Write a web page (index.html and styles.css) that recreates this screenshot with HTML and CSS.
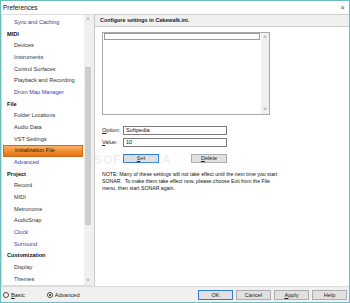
FILE: index.html
```html
<!DOCTYPE html>
<html>
<head>
  <title>Preferences</title>
  <link rel="stylesheet" href="styles.css">
</head>
<body>
  <div class="window">
    <div class="titlebar">
      <span class="title">Preferences</span>
      <span class="close">&#x2715;</span>
    </div>

    <div class="main">
      <div class="tree">
        <div class="tree-list">
          <div class="item link">Sync and Caching</div>
          <div class="cat">MIDI</div>
          <div class="item">Devices</div>
          <div class="item">Instruments</div>
          <div class="item">Control Surfaces</div>
          <div class="item">Playback and Recording</div>
          <div class="item link">Drum Map Manager</div>
          <div class="cat">File</div>
          <div class="item">Folder Locations</div>
          <div class="item">Audio Data</div>
          <div class="item">VST Settings</div>
          <div class="item selected">Initialization File</div>
          <div class="item link">Advanced</div>
          <div class="cat">Project</div>
          <div class="item">Record</div>
          <div class="item">MIDI</div>
          <div class="item">Metronome</div>
          <div class="item">AudioSnap</div>
          <div class="item link">Clock</div>
          <div class="item link">Surround</div>
          <div class="cat">Customization</div>
          <div class="item">Display</div>
          <div class="item">Themes</div>
        </div>
        <div class="vscroll">
          <span class="arrow">&#x2C4;</span>
          <div class="track"><div class="thumb"></div></div>
          <span class="arrow">&#x2C5;</span>
        </div>
      </div>

      <div class="panel">
        <div class="panel-head">Configure settings in Cakewalk.ini.</div>
        <div class="panel-body">
          <div class="listbox">
            <div class="list-items">
              <div class="list-row"></div>
            </div>
            <div class="list-scroll">
              <span class="arrow">&#x2C4;</span>
              <span class="arrow">&#x2C5;</span>
            </div>
          </div>

          <div class="field first">
            <label><u>O</u>ption:</label>
            <div class="input">Softpedia</div>
          </div>
          <div class="field">
            <label><u>V</u>alue:</label>
            <div class="input">10</div>
          </div>

          <div class="actions">
            <div class="btn default"><u>S</u>et</div>
            <div class="btn"><u>D</u>elete</div>
          </div>

          <p class="note">NOTE: Many of these settings will not take effect until the next time you start<br>SONAR.&nbsp; To make them take effect now, please choose Exit from the File<br>menu, then start SONAR again.</p>

          <div class="watermark">SOFTPEDIA</div>
        </div>
      </div>
    </div>

    <div class="footer">
      <div class="radios">
        <span class="radio"><span class="dot"></span><span><u>B</u>asic</span></span>
        <span class="radio on"><span class="dot"></span><span>Advanced</span></span>
      </div>
      <div class="buttons">
        <div class="btn default">OK</div>
        <div class="btn">Cancel</div>
        <div class="btn"><u>A</u>pply</div>
        <div class="btn">Help</div>
      </div>
    </div>
  </div>
</body>
</html>
```

FILE: styles.css
```css
* {
  margin: 0;
  padding: 0;
  box-sizing: border-box;
}

html, body {
  width: 350px;
  height: 303px;
  overflow: hidden;
  font-family: "Liberation Sans", Arial, sans-serif;
  font-size: 5.6px;
  color: #222;
  background: #fff;
}

u {
  text-decoration: underline;
  text-underline-offset: 1px;
}

.window {
  width: 350px;
  height: 303px;
  border: 1px solid #6dbdbd;
  display: flex;
  flex-direction: column;
  background: #fff;
}

.titlebar {
  height: 14px;
  display: flex;
  justify-content: space-between;
  align-items: center;
  padding: 0 4px 0 2px;
  font-size: 6.4px;
  color: #111;
}

.close {
  font-size: 6px;
  color: #666;
}

.main {
  flex: 1;
  display: flex;
  background: #f0f0f0;
}

/* left tree */
.tree {
  width: 91px;
  display: flex;
  background: #fff;
  border: 1px solid #dcdcdc;
  border-right: none;
}

.tree-list {
  flex: 1;
  padding-top: 2px;
  overflow: hidden;
}

.cat, .item {
  height: 11.68px;
  line-height: 11.68px;
  white-space: nowrap;
}

.cat {
  padding-left: 5px;
  font-weight: bold;
  color: #111;
}

.item {
  padding-left: 12px;
  color: #333;
}

.item.link {
  color: #3a3aa8;
}

.item.selected {
  margin-left: 1px;
  margin-right: 1px;
  padding-left: 11px;
  background: linear-gradient(#f9b36a, #ee8a2e 55%, #e2701a);
  border: 1px solid #d46a18;
  line-height: 9.7px;
  color: #2a1a0a;
}

.vscroll {
  width: 8px;
  background: #f0f0f0;
  display: flex;
  flex-direction: column;
  align-items: center;
}

.arrow {
  height: 9px;
  line-height: 9px;
  font-size: 6px;
  color: #777;
}

.track {
  flex: 1;
  width: 100%;
  padding-top: 43px;
  padding-bottom: 51px;
  display: flex;
}

.thumb {
  flex: 1;
  margin: 0 1px;
  background: #cdcdcd;
}

/* right panel */
.panel {
  flex: 1;
  margin-left: 2px;
  display: flex;
  flex-direction: column;
  background: #fff;
  border-left: 1px solid #c9c9c9;
}

.panel-head {
  height: 13px;
  line-height: 11px;
  padding-left: 5px;
  background: #f0f0f0;
  border-top: 1px solid #cfcfcf;
  border-bottom: 1px solid #cfcfcf;
  font-size: 5.4px;
  font-weight: bold;
  color: #222;
}

.panel-body {
  flex: 1;
  position: relative;
  padding: 5px 8px 0 7px;
}

.listbox {
  width: 168px;
  height: 83px;
  border: 1px solid #a9a9a9;
  display: flex;
}

.list-items {
  flex: 1;
  padding: 0 1px;
}

.list-row {
  height: 7px;
  border: 1px solid #9a9a9a;
}

.list-scroll {
  width: 8px;
  background: #f0f0f0;
  display: flex;
  flex-direction: column;
  justify-content: space-between;
  align-items: center;
}

.field {
  display: flex;
  align-items: center;
  margin-top: 3px;
}

.field.first {
  margin-top: 11px;
}

.field label {
  width: 21px;
  color: #222;
}

.input {
  width: 104px;
  height: 9px;
  line-height: 7px;
  padding-left: 2px;
  border: 1px solid #7a7a7a;
  color: #111;
}

.actions {
  display: flex;
  gap: 32px;
  margin: 7px 0 0 21px;
}

.btn {
  width: 36px;
  height: 9px;
  line-height: 7px;
  text-align: center;
  background: #e1e1e1;
  border: 1px solid #adadad;
  color: #222;
}

.btn.default {
  border-color: #2f7fd6;
}

.note {
  margin-top: 8px;
  font-size: 5.2px;
  line-height: 7px;
  color: #111;
  white-space: nowrap;
}

.watermark {
  position: absolute;
  left: -1px;
  top: 126px;
  font-size: 12px;
  font-weight: bold;
  letter-spacing: 1px;
  color: rgba(200, 200, 200, 0.3);
  pointer-events: none;
}

/* footer */
.footer {
  height: 17px;
  display: flex;
  justify-content: space-between;
  align-items: center;
  padding: 0 2px 0 2px;
  background: #f0f0f0;
  border-top: 1px solid #dcdcdc;
}

.radios {
  display: flex;
  gap: 22px;
}

.radio {
  display: flex;
  align-items: center;
  gap: 2px;
  color: #222;
}

.dot {
  width: 6px;
  height: 6px;
  border: 1px solid #444;
  border-radius: 50%;
  background: #fff;
  position: relative;
}

.radio.on .dot::after {
  content: "";
  position: absolute;
  left: 1px;
  top: 1px;
  width: 2px;
  height: 2px;
  border-radius: 50%;
  background: #222;
}

.buttons {
  display: flex;
  gap: 3px;
}

.buttons .btn {
  width: 35px;
  height: 10px;
  line-height: 8px;
}
```
